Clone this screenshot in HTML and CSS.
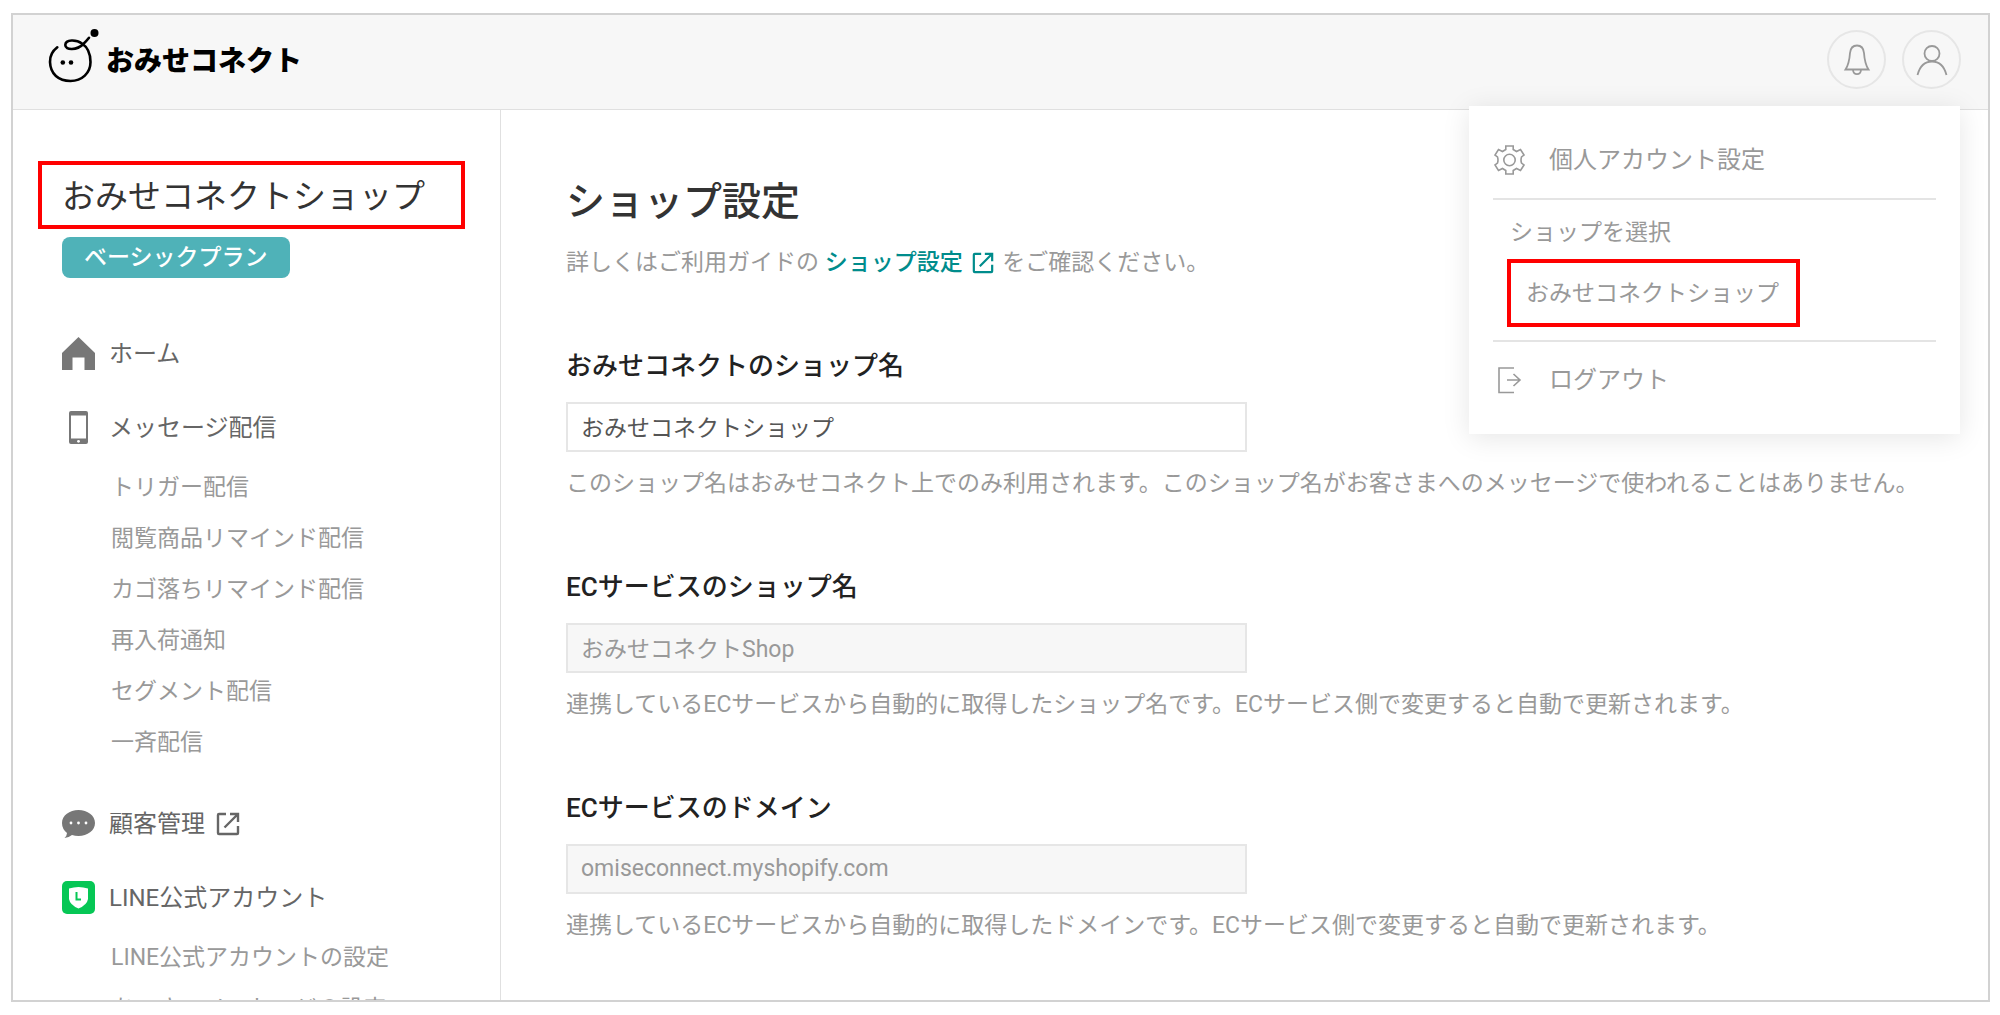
FILE: index.html
```html
<!DOCTYPE html>
<html lang="ja">
<head>
<meta charset="utf-8">
<title>ショップ設定 | おみせコネクト</title>
<meta name="viewport" content="width=device-width, initial-scale=1">
<link rel="stylesheet" href="styles.css">
</head>
<body>
<svg class="sprite" aria-hidden="true">
  <symbol id="external" viewBox="0 0 24 24">
    <path d="M10 2H3Q2 2 2 3V21Q2 22 3 22H21Q22 22 22 21V14M14 2H22V10M21.500 2.500L8.500 15.500" fill="none" stroke="currentColor" stroke-width="2.400"/>
  </symbol>
</svg>
<div class="app">
  <header class="header">
    <a class="logo" href="#">
      <svg class="logo-mark" viewBox="48 30 52 56" aria-hidden="true">
        <path d="M57.300 47.300C52.500 51 49.800 56 50 62C50.400 74 58.500 81 70.500 81C82 81 90.500 73 90.500 62C90.500 54 88 47.500 82 43.500C76.500 39.500 65.500 39 65.300 45C65.200 50.500 77 50.500 83.300 44Q86.500 41 89 37.800" fill="none" stroke="#000" stroke-width="2.600" stroke-linecap="round"/>
        <circle cx="94.500" cy="33" r="4"/><circle cx="62.800" cy="62.500" r="2.300"/><circle cx="71" cy="62.500" r="2.300"/>
      </svg>
      <span>おみせコネクト</span>
    </a>
    <div class="actions">
      <button class="round" type="button" aria-label="お知らせ">
        <svg viewBox="0 0 32 32" aria-hidden="true"><path d="M16 1.500C11.500 1.500 9.500 4 9 9C8.500 16 7.500 21 4.500 25.500H27.500C24.500 21 23.500 16 23 9C22.500 4 20.500 1.500 16 1.500ZM12 26C12.500 31.500 19.500 31.500 20 26"/></svg>
      </button>
      <button class="round" type="button" aria-label="アカウント" aria-expanded="true">
        <svg viewBox="0 0 32 32" aria-hidden="true"><circle cx="16" cy="9.500" r="7.500"/><path d="M1.500 31C4 21.500 9 17.500 16 17.500S28 21.500 30.500 31"/></svg>
      </button>
      <div class="menu">
        <a class="menu-item" href="#">
          <svg viewBox="0 0 32 32" aria-hidden="true"><circle cx="16.500" cy="16" r="5.700"/><path d="M12.800 2H20.200V5.500L23.500 7.500L27.500 5.500L31 11L28.500 13Q27.500 16 28.500 19L31 21L27.500 26.500L23.500 24.500L20.200 26.500V30H12.800V26.500L9.500 24.500L5.500 26.500L2 21L4.500 19Q5.500 16 4.500 13L2 11L5.500 5.500L9.500 7.500L12.800 5.500Z"/></svg>
          <span>個人アカウント設定</span>
        </a>
        <div class="shops">
          <p class="shops-title">ショップを選択</p>
          <a class="shop marked" href="#">おみせコネクトショップ</a>
        </div>
        <a class="menu-item" href="#">
          <svg viewBox="0 0 32 32" aria-hidden="true"><path d="M21 4H6V28.500H21M14 16H27M20.500 10L27 16L20.500 22"/></svg>
          <span>ログアウト</span>
        </a>
      </div>
    </div>
  </header>
  <div class="body">
    <aside class="sidebar">
      <p class="shop-name marked">おみせコネクトショップ</p>
      <div class="sidebar-inner">
        <span class="plan">ベーシックプラン</span>
        <nav class="nav">
          <a class="nav-item" href="#">
            <svg viewBox="0 0 33 33" aria-hidden="true"><path fill="currentColor" d="M16.500 0L33 16V33H22.500V20.500H10.500V33H0V16Z"/></svg>
            <span>ホーム</span>
          </a>
          <div>
            <a class="nav-item" href="#">
              <svg viewBox="0 0 33 33" aria-hidden="true"><path fill="currentColor" fill-rule="evenodd" d="M9 0H24Q26 0 26 2V31Q26 33 24 33H9Q7 33 7 31V2Q7 0 9 0ZM9 4.500V27.500H24V4.500Z"/><circle cx="16.500" cy="30.300" r="1.400" fill="#fff"/></svg>
              <span>メッセージ配信</span>
            </a>
            <ul class="sub">
              <li><a href="#">トリガー配信</a></li>
              <li><a href="#">閲覧商品リマインド配信</a></li>
              <li><a href="#">カゴ落ちリマインド配信</a></li>
              <li><a href="#">再入荷通知</a></li>
              <li><a href="#">セグメント配信</a></li>
              <li><a href="#">一斉配信</a></li>
            </ul>
          </div>
          <a class="nav-item" href="#">
            <svg viewBox="0 0 33 33" aria-hidden="true"><path fill="currentColor" d="M16.500 3C25.500 3 33 8.500 33 16S25.500 29 16.500 29Q13 29 10 28Q7 30.500 2.500 31Q5 28.500 5 26Q0 22 0 16C0 8.500 7.500 3 16.500 3Z"/><g fill="#fff"><circle cx="9" cy="16" r="1.400"/><circle cx="16.500" cy="16" r="1.400"/><circle cx="24" cy="16" r="1.400"/></g></svg>
            <span>顧客管理</span>
            <svg class="ext" aria-hidden="true"><use href="#external"/></svg>
          </a>
          <div>
            <a class="nav-item" href="#">
              <svg viewBox="0 0 33 33" aria-hidden="true"><rect width="33" height="33" rx="5" fill="#06c755"/><path fill="#fff" d="M7 7.500Q16.500 4.500 26 7.500V18Q25 24 16.500 27.500Q8 24 7 18Z"/><path d="M14.500 11V18.500H19" fill="none" stroke="#06c755" stroke-width="2"/></svg>
              <span>LINE公式アカウント</span>
            </a>
            <ul class="sub">
              <li><a href="#">LINE公式アカウントの設定</a></li>
              <li><a href="#">あいさつメッセージの設定</a></li>
            </ul>
          </div>
        </nav>
      </div>
    </aside>
    <main class="main">
      <h1>ショップ設定</h1>
      <p class="note">詳しくはご利用ガイドの <a class="guide" href="#">ショップ設定 <svg class="ext" aria-hidden="true"><use href="#external"/></svg></a> をご確認ください。</p>
      <form>
        <div class="field">
          <label for="shop-name">おみせコネクトのショップ名</label>
          <input id="shop-name" type="text" value="おみせコネクトショップ">
          <p class="note">このショップ名はおみせコネクト上でのみ利用されます。このショップ名がお客さまへのメッセージで使われることはありません。</p>
        </div>
        <div class="field">
          <label for="ec-name">ECサービスのショップ名</label>
          <input id="ec-name" type="text" value="おみせコネクトShop" disabled>
          <p class="note">連携しているECサービスから自動的に取得したショップ名です。ECサービス側で変更すると自動で更新されます。</p>
        </div>
        <div class="field">
          <label for="ec-domain">ECサービスのドメイン</label>
          <input id="ec-domain" type="text" value="omiseconnect.myshopify.com" disabled>
          <p class="note">連携しているECサービスから自動的に取得したドメインです。ECサービス側で変更すると自動で更新されます。</p>
        </div>
      </form>
    </main>
  </div>
</div>
</body>
</html>
```
FILE: styles.css
```css
* { box-sizing: border-box; }

body {
  margin: 0;
  padding: 13px 10px 13px 11px;
  background: #fff;
  color: #999;
  font: 23px/36px Roboto, "Noto Sans CJK JP", sans-serif;
}

h1, p, ul { margin: 0; padding: 0; font-weight: 400; }
ul { list-style: none; }
a { color: inherit; text-decoration: none; }
svg { flex: none; }
.sprite { display: none; }

.app {
  display: flex;
  flex-direction: column;
  height: calc(100vh - 26px);
  border: 2px solid #d2d2d2;
}

.marked { border: 4px solid #f00; }

/* Header */
.header {
  display: flex;
  flex: none;
  justify-content: space-between;
  align-items: flex-start;
  padding: 15px 27px 20px 35px;
  border-bottom: 1px solid #e0e0e0;
  background: #f7f7f7;
}

.logo {
  display: flex;
  align-items: center;
  gap: 6px;
  color: #000;
  font-size: 28px;
  font-weight: 900;
}
.logo span { padding-top: 8px; }
.logo-mark { width: 52px; height: 56px; overflow: visible; }

.actions { position: relative; display: flex; gap: 16px; }

.round {
  display: flex;
  align-items: center;
  justify-content: center;
  width: 59px;
  height: 59px;
  padding: 0;
  border: 2px solid #e6e6e6;
  border-radius: 50%;
  background: none;
}
.round svg {
  width: 32px;
  height: 32px;
  fill: none;
  stroke: #999;
  stroke-width: 1.8;
}

/* Account menu */
.menu {
  position: absolute;
  z-index: 1;
  top: 76px;
  right: 1px;
  width: 491px;
  padding: 36px 24px;
  background: #fff;
  box-shadow: 0 4px 26px rgba(0, 0, 0, 0.1);
}
.menu-item {
  display: flex;
  align-items: center;
  gap: 24px;
  font-size: 24px;
}
.menu-item svg {
  width: 32px;
  height: 32px;
  fill: none;
  stroke: #999;
  stroke-width: 1.6;
}
.shops {
  margin: 20px 0;
  padding: 15px 14px 13px;
  border: solid #e4e4e4;
  border-width: 2px 0;
}
.shops-title { padding-left: 3px; }
.shop {
  display: inline-block;
  margin-top: 8px;
  padding: 13px 17px 11px 15px;
}

/* Sidebar */
.body { display: flex; flex: 1; min-height: 0; }

.sidebar {
  flex: none;
  width: 488px;
  padding: 51px 35px 0 25px;
  border-right: 1px solid #e0e0e0;
  overflow: hidden;
}
.shop-name {
  padding: 14px 20px 10px;
  color: #333;
  font-size: 33px;
}
.sidebar-inner { padding: 8px 0 0 24px; }
.plan {
  display: inline-block;
  padding: 3px 22px 2px;
  border-radius: 8px;
  background: #4fb2b8;
  color: #fff;
  font-weight: 500;
}
.nav {
  display: flex;
  flex-direction: column;
  gap: 38px;
  margin-top: 58px;
}
.nav-item {
  display: flex;
  align-items: center;
  gap: 14px;
  color: #666;
  font-size: 24px;
}
.nav-item > svg { width: 33px; height: 33px; margin-bottom: 2px; color: #777; }
.sub { margin-top: 16px; padding-left: 49px; }
.sub li { line-height: 51px; }

.ext { width: 22px; height: 22px; }
.nav-item > .ext { width: 24px; height: 24px; margin: 0 0 0 -3px; color: #666; }

/* Settings */
.main {
  flex: 1;
  min-width: 0;
  padding: 62px 65px 0;
  overflow: hidden;
}
h1 {
  margin-bottom: 13px;
  color: #333;
  font-size: 39px;
  line-height: 60px;
  font-weight: 500;
}
.guide { color: #008c8c; font-weight: 500; }
.guide .ext { margin: 0 2px 0 4px; vertical-align: -4px; }
.field { margin: 67px 0; }
.form { margin-top: 66px; }
.field label {
  display: block;
  margin-bottom: 18px;
  color: #222;
  font-size: 26px;
  font-weight: 500;
}
.field input {
  display: block;
  width: 100%;
  max-width: 681px;
  height: 50px;
  margin-bottom: 14px;
  padding: 0 13px 2px;
  border: 2px solid #e6e6e6;
  border-radius: 0;
  background: #fff;
  color: #555;
  font: inherit;
}
.field input:disabled { background: #f7f7f7; color: #999; }
```
